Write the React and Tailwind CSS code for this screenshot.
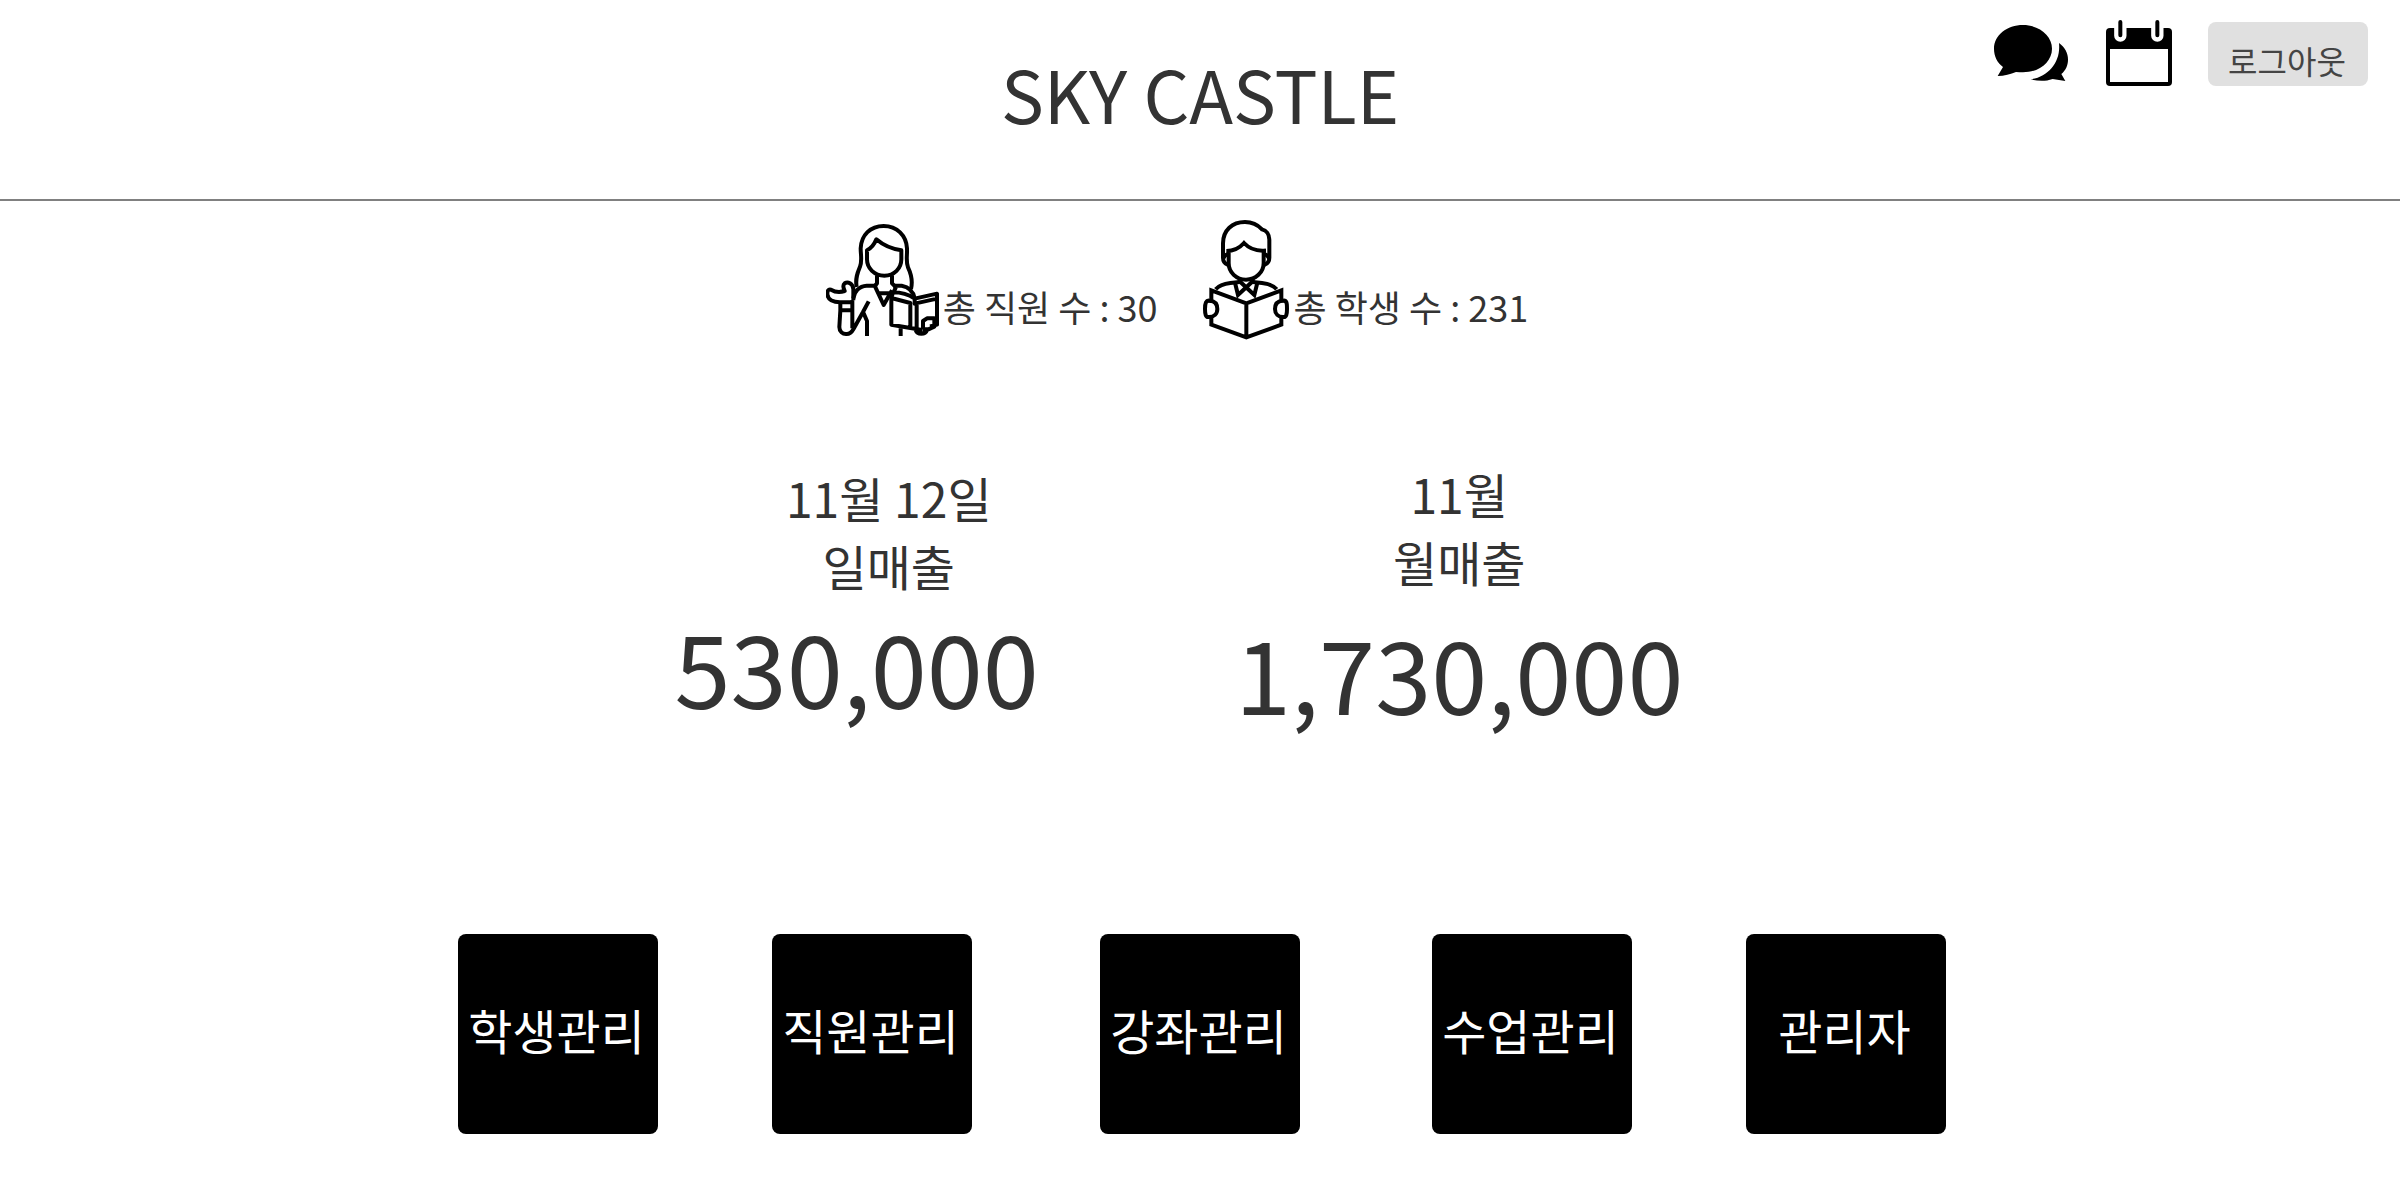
const menuItems = [
  { label: '학생관리', spacing: '' },
  { label: '직원관리', spacing: 'ml-[114px]' },
  { label: '강좌관리', spacing: 'ml-32' },
  { label: '수업관리', spacing: 'ml-[132px]' },
  { label: '관리자', spacing: 'ml-[114px]' },
];

function ChatIcon() {
  return (
    <svg viewBox="27 36 228 192" className="h-16 w-[76px]" fill="#000" aria-hidden="true">
      <path d="M114 45C162 45 201 76 201 116S162 187 114 187C107 187 100 187 93 186C77 193 58 198 38 198L54 171C37 158 27 139 27 116C27 76 66 45 114 45Z" />
      <path d="M222 99C240 112 249 130 249 149C249 166 242 181 229 192L241 213L203 207C180 215 158 213 137 208C190 200 228 156 222 99Z" />
    </svg>
  );
}

function CalendarIcon() {
  return (
    <svg viewBox="363 30 198 198" className="h-[66px] w-[66px]" aria-hidden="true">
      <rect x="363" y="54" width="198" height="174" rx="12" fill="#000" />
      <rect x="375" y="117" width="174" height="99" fill="#fff" />
      <g fill="none" strokeLinecap="round">
        <path d="M406 40V77M517 40V77" stroke="#fff" strokeWidth="37" />
        <path d="M406 36V76M517 36V76" stroke="#000" strokeWidth="12" />
      </g>
    </svg>
  );
}

function TeacherIcon() {
  return (
    <svg
      viewBox="18 15 342 360"
      className="h-[120px] w-[114px]"
      fill="none"
      stroke="#000"
      strokeWidth="12"
      strokeLinejoin="round"
      aria-hidden="true"
    >
      <path d="M110 216C105 190 113 172 120 155C127 138 122 120 122 100C124 60 151 33 191 33S259 62 261 100C262 122 257 138 264 157C274 178 279 197 273 222" />
      <path d="M141 106V133C141 160 163 182 193 182S244 160 244 133V106C215 102 190 91 169 73C163 88 155 99 141 106Z" />
      <path d="M171 181V205L164 213M216 181V205L226 215" />
      <path d="M172 212H140C117 213 103 230 100 250M165 214L191 270L216 226M172 235H214" />
      <path d="M220 212H245C267 216 280 230 284 250" />
      <path d="M214 249L271 264V339L214 329ZM214 249L219 232C243 232 268 240 284 251L351 236V329L330 334M290 264V342L271 339M284 251V266L351 251M222 229L228 216" />
      <path d="M292 343L308 345M309 343V318L321 310H343V335L325 343L309 343M287 345C292 360 316 360 321 345" />
      <path d="M100 256V222C98 205 84 199 74 205C66 211 71 220 74 228C55 234 43 230 33 224C24 222 22 228 22 238C24 255 40 262 60 262H100" />
      <path d="M61 263V286L58 336C58 350 68 358 80 357C90 357 96 350 101 341L129 291L146 259M97 256V340M61 286H97M129 290L141 318V363M242 340V363" />
    </svg>
  );
}

function StudentIcon() {
  return (
    <svg
      viewBox="24 15 264 360"
      className="h-[120px] w-[88px]"
      fill="none"
      stroke="#000"
      strokeWidth="12"
      aria-hidden="true"
    >
      <path d="M99 150C89 146 84 138 84 128V85C84 45 112 21 150 21C171 21 187 28 201 43C214 46 223 58 223 74V128C223 138 218 146 208 150" />
      <path d="M101 107V144C101 172 124 194 153 194S206 172 206 144V107C182 108 163 101 147 84C132 101 117 108 94 108M206 107H213" />
      <path d="M84 131C88 122 92 118 101 117M223 131C219 122 215 118 206 117" />
      <path d="M62 223C72 211 88 206 106 204L134 201M245 223C235 211 219 206 201 204L173 201" />
      <path d="M134 192L134 199L178 240L187 203M173 192L173 199L129 240L120 203" />
      <path d="M49 258V226L154 265L259 226V258M49 306V329L154 367L259 329V306M154 265V369" />
      <path d="M47 258C32 253 30 266 30 282S32 308 42 306C57 306 67 297 67 282C67 266 58 258 45 257M261 258C276 253 276 266 276 282S274 308 264 306C250 306 240 297 240 282C240 266 249 258 262 257" />
    </svg>
  );
}

function Headcount({ icon, label, count }) {
  return (
    <div className="flex items-end gap-[3px]">
      {icon}
      <p className="pb-[10px] text-4xl leading-[48px]">
        {label} : {count}
      </p>
    </div>
  );
}

export default function App() {
  return (
    <div className="min-h-screen bg-white font-['Noto_Sans_CJK_KR',sans-serif] text-[#333333]">
      <header className="grid grid-cols-[1fr_auto_1fr] border-b-2 border-[#808080]">
        <h1 className="col-start-2 pt-[45px] pb-[58px] text-[72px] leading-[96px]">SKY CASTLE</h1>
        <div className="flex items-end gap-9 self-start justify-self-end pt-5 pr-8">
          <button type="button" aria-label="채팅">
            <ChatIcon />
          </button>
          <button type="button" aria-label="일정">
            <CalendarIcon />
          </button>
          <button
            type="button"
            className="h-16 w-40 rounded-lg bg-[#e0e0e0] pt-3 pr-0.5 text-[32px] leading-[48px] text-[#444444]"
          >
            로그아웃
          </button>
        </div>
      </header>

      <main>
        <section className="flex items-end justify-center gap-[45px] pt-[19px] pr-[46px]">
          <Headcount icon={<TeacherIcon />} label="총 직원 수" count={30} />
          <Headcount icon={<StudentIcon />} label="총 학생 수" count={231} />
        </section>

        <section className="flex items-start justify-center gap-[196px] pt-[119px] pr-[42px] text-center">
          <div className="pt-1">
            <h2 className="pl-16 text-5xl leading-[68px]">
              11월 12일
              <br />
              일매출
            </h2>
            <p className="pt-1.5 text-[101px] leading-[120px]">530,000</p>
          </div>
          <div>
            <h2 className="text-5xl leading-[68px]">
              11월
              <br />
              월매출
            </h2>
            <p className="pt-4 text-[101px] leading-[120px]">1,730,000</p>
          </div>
        </section>

        <nav className="flex justify-center pt-[203px] pl-1">
          {menuItems.map((item) => (
            <button
              key={item.label}
              type="button"
              className={`${item.spacing} h-[200px] w-[200px] shrink-0 rounded-lg bg-black pr-[3px] pb-[10px] text-5xl text-white`}
            >
              {item.label}
            </button>
          ))}
        </nav>
      </main>
    </div>
  );
}
